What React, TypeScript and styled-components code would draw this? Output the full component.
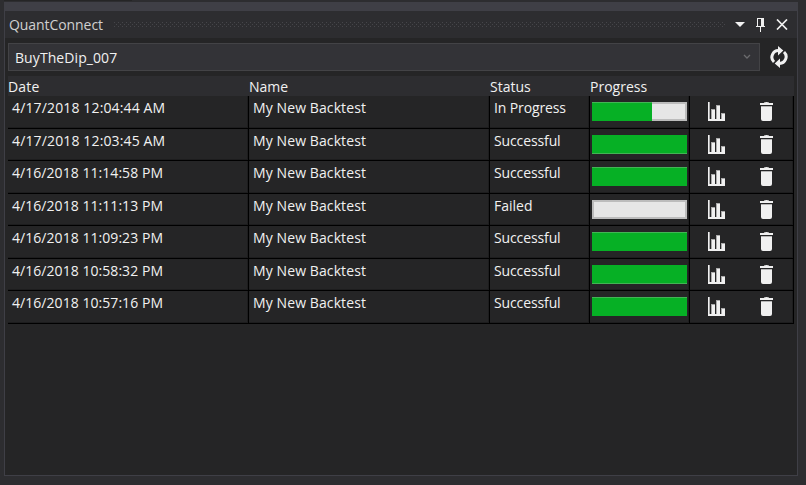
import React from "react";
import styled, { createGlobalStyle } from "styled-components";

const Global = createGlobalStyle`
  * { box-sizing: border-box; }
  html, body { margin: 0; background: #2d2d30; }
  body { overflow: hidden; font: 14px/20px "Open Sans", "Noto Sans", sans-serif; color: #f1f1f1; }
`;

const Shell = styled.div`
  width: 806px;
  height: 485px;
  padding-left: 4px;
  background: #2d2d30;
`;
const TabEdge = styled.div`
  width: 128px;
  height: 1px;
  margin-bottom: 1px;
  background: #252526;
`;
const Panel = styled.section`
  width: 794px;
  height: 474px;
  display: flex;
  flex-direction: column;
  border: 1px solid #3f3f46;
  border-top: 9px solid #3f3f46;
  background: #252526;
`;
const TitleBar = styled.header`
  height: 27px;
  flex: none;
  display: flex;
  align-items: center;
  padding: 0 9px 0 4px;
  background: #2d2d30;
  color: #d0d0d0;
`;
const Grip = styled.svg`
  width: 612px;
  height: 6px;
  margin: 0 9px 0 auto;
  flex: none;
`;
const TitleIcon = styled.svg<{ $gap: number }>`
  display: block;
  flex: none;
  margin-right: ${(p) => p.$gap}px;
`;
const Controls = styled.div`
  height: 38px;
  flex: none;
  display: flex;
  align-items: center;
  padding: 0 9px 0 3px;
  justify-content: space-between;
`;
const Combo = styled.div`
  width: 752px;
  height: 28px;
  display: flex;
  align-items: center;
  justify-content: space-between;
  padding: 0 8px 0 6px;
  border: 1px solid #434346;
  background: #333337;
`;
const Table = styled.div`
  width: 786px;
  margin-left: 3px;
  display: flex;
  flex-direction: column;
`;
const Row = styled.div<{ $height: number }>`
  height: ${(p) => p.$height}px;
  display: grid;
  grid-template-columns: 241px 241px 100px 100px 104px;
`;
const HeaderRow = styled(Row)`
  background: #2d2d30;
  line-height: 22px;
`;
const Cell = styled.div`
  padding: 2px 0 0 4px;
  border-right: 1px solid #000;
  border-bottom: 1px solid #000;
  box-shadow: inset -1px -1px #1d1d1e;
`;
const BarCell = styled(Cell)`
  padding: 6px 0 0 2px;
`;
const ActionCell = styled(Cell)`
  display: flex;
  align-items: flex-start;
  padding: 6px 0 0 18px;
  gap: 35px;
`;
const Text = styled.span<{ $track?: number }>`
  display: block;
  white-space: pre;
  letter-spacing: ${(p) => p.$track ?? 0}px;
`;
const ComboText = styled(Text)`
  padding-top: 2px;
`;
const Track = styled.div`
  width: 95px;
  height: 19px;
  background: #e6e6e6;
  box-shadow: inset 0 0 0 2px #bcbcbc;
`;
const Fill = styled.div<{ $edge: "top" | "bottom" }>`
  height: 19px;
  background: #06b025;
  border-${(p) => p.$edge}: 1px solid #43b455;
`;

const ChartIcon = () => (
  <svg width="17" height="19" viewBox="0 0 17 19" shapeRendering="crispEdges">
    <path fill="#aaa" d="M1 0h1v17H1zM3 7h4v10H3zM8 3h4v14H8zM13 11h4v6h-4z" />
    <path fill="#f0f0f0" d="M0 0h1v17H0zM4 8h3v9H4zM9 4h3v13H9zM14 12h3v5h-3zM0 17h17v2H0z" />
  </svg>
);
const TrashIcon = () => (
  <svg width="13" height="19" viewBox="0 0 13 19">
    <path fill="#f0f0f0" d="M4 .4Q6.5-.4 9 .4V1h4v2H0V1h4zM1 4h11v13q0 2-2 2H3q-2 0-2-2z" />
    <path fill="#b5b5b5" d="M1 4h11v1H1z" />
  </svg>
);

type Backtest = { date: string; status: string; progress: number; edge: "top" | "bottom" };
const backtests: Backtest[] = [
  { date: "4/17/2018 12:04:44 AM", status: "In Progress", progress: 60, edge: "top" },
  { date: "4/17/2018 12:03:45 AM", status: "Successful", progress: 95, edge: "bottom" },
  { date: "4/16/2018 11:14:58 PM", status: "Successful", progress: 95, edge: "top" },
  { date: "4/16/2018 11:11:13 PM", status: "Failed", progress: 0, edge: "bottom" },
  { date: "4/16/2018 11:09:23 PM", status: "Successful", progress: 95, edge: "top" },
  { date: "4/16/2018 10:58:32 PM", status: "Successful", progress: 95, edge: "bottom" },
  { date: "4/16/2018 10:57:16 PM", status: "Successful", progress: 95, edge: "top" },
];

export default function App() {
  return (
    <>
      <Global />
      <Shell>
        <TabEdge />
        <Panel>
          <TitleBar>
            <Text $track={-0.07}>QuantConnect</Text>
            <Grip>
              <defs>
                <pattern id="grip" width="4" height="4" patternUnits="userSpaceOnUse">
                  <path fill="#46464a" d="M0 0h1v1H0zM2 2h1v1H2z" />
                </pattern>
              </defs>
              <rect width="612" height="5" fill="url(#grip)" />
            </Grip>
            <TitleIcon $gap={11} width="10" height="5"><path fill="#f1f1f1" d="M0 0h10L5 5z" /></TitleIcon>
            <TitleIcon $gap={11} width="9" height="14" shapeRendering="crispEdges">
              <path fill="#f1f1f1" d="M1 0h7v8h1v1H5v5H4V9H0V8h1zM2 1v7h3V1z" />
            </TitleIcon>
            <TitleIcon $gap={0} width="12" height="11">
              <path d="M1 .5l10 10M11 .5l-10 10" stroke="#f1f1f1" strokeWidth="1.7" />
            </TitleIcon>
          </TitleBar>
          <Controls>
            <Combo>
              <ComboText $track={0.08}>BuyTheDip_007</ComboText>
              <svg width="8" height="6"><path d="M1 1l3 3 3-3" fill="none" stroke="#6b6b6e" strokeWidth="1.3" /></svg>
            </Combo>
            <svg width="18" height="22" viewBox="0 0 18 22">
              <g fill="none" stroke="#f1f1f1" strokeWidth="3">
                <path d="M4 16A6.6 6.6 0 0 1 9 4.6" />
                <path d="M14 6A6.6 6.6 0 0 1 9 17.4" />
              </g>
              <path fill="#f1f1f1" d="M8 0l5.3 4.6L8 9.4zM10 22l-5.3-4.6L10 12.6z" />
            </svg>
          </Controls>
          <Table>
            <HeaderRow $height={20}>
              <Text $track={0.2}>Date</Text>
              <Text>Name</Text>
              <Text>Status</Text>
              <Text>Progress</Text>
            </HeaderRow>
            {backtests.map((b, i) => (
              <Row key={b.date} $height={i % 2 ? 32 : 33}>
                <Cell><Text $track={b.date.endsWith("AM") ? 0.14 : 0.05}>{b.date}</Text></Cell>
                <Cell><Text $track={0.1}>My New Backtest</Text></Cell>
                <Cell><Text $track={b.status === "Failed" ? 0 : -0.12}>{b.status}</Text></Cell>
                <BarCell>
                  <Track>{b.progress > 0 && <Fill $edge={b.edge} style={{ width: b.progress }} />}</Track>
                </BarCell>
                <ActionCell><ChartIcon /><TrashIcon /></ActionCell>
              </Row>
            ))}
          </Table>
        </Panel>
      </Shell>
    </>
  );
}
